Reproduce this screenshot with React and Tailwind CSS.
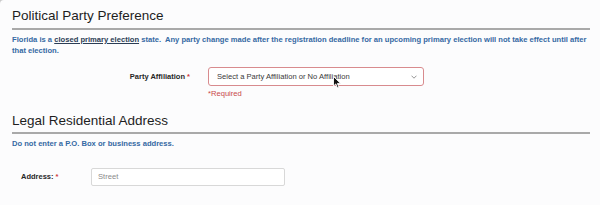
import React from "react";

const Cursor = () => (
  <svg
    className="absolute left-[124px] top-[8px]"
    width="9"
    height="13"
    viewBox="0 0 9 13"
  >
    <path
      d="M0.5 0.5 L0.5 10 L2.8 7.9 L4.4 11.8 L5.9 11.2 L4.4 7.4 L7.6 7.4 Z"
      fill="#111"
      stroke="#fff"
      strokeWidth="0.9"
      strokeLinejoin="round"
    />
  </svg>
);

const SectionTitle = ({ children, className = "" }) => (
  <h2
    className={`text-[13.5px] leading-[16px] text-[#1e1e1e] border-b-2 border-[#a9a9a9] ${className}`}
  >
    {children}
  </h2>
);

export default function App() {
  return (
    <div className="w-[600px] h-[205px] bg-[#c9c9c9] overflow-hidden">
      <div className="w-full h-full bg-[#fcfcfd] rounded-tl-[4px] pl-[12px] pr-[10px] font-['Liberation_Sans',Arial,sans-serif]">
        {/* Political party */}
        <SectionTitle className="pt-[7.5px] pb-[4.5px]">
          Political Party Preference
        </SectionTitle>
        <p className="mt-[5px] text-[7.6px] leading-[10.5px] font-bold text-[#3569a3] whitespace-nowrap">
          Florida is a{" "}
          <span className="underline text-[#2b3d55]">closed primary election</span>{" "}
          state.&nbsp; Any party change made after the registration deadline for
          an upcoming primary election will not take effect until after
          <br />
          that election.
        </p>

        <div className="mt-[11px] flex items-center">
          <label className="w-[178px] text-right text-[7.5px] font-bold text-[#262626]">
            Party Affiliation <span className="text-[#d03a3a]">*</span>
          </label>
          <div className="ml-[18px] relative w-[216px] h-[19px] border border-[#d88b8e] rounded-[3px] bg-white flex items-center pl-[8px] pr-[5px]">
            <span className="flex-1 text-[7.6px] text-[#3a3a3a]">
              Select a Party Affiliation or No Affiliation
            </span>
            <svg width="6" height="4" viewBox="0 0 6 4" className="mr-[1px]">
              <path
                d="M0.5 0.7 L3 3.2 L5.5 0.7"
                fill="none"
                stroke="#8a8a8a"
                strokeWidth="0.9"
              />
            </svg>
            <Cursor />
          </div>
        </div>
        <p className="mt-[3px] ml-[196px] text-[7.6px] leading-[10px] text-[#c8494b]">
          *Required
        </p>

        {/* Residential address */}
        <SectionTitle className="mt-[13.5px] pb-[3.5px]">
          Legal Residential Address
        </SectionTitle>
        <p className="mt-[4.75px] text-[7.6px] leading-[10.5px] font-bold text-[#3569a3]">
          Do not enter a P.O. Box or business address.
        </p>

        <div className="mt-[18.5px] flex items-center">
          <label className="ml-[9px] w-[70px] text-[7.5px] font-bold text-[#262626]">
            Address: <span className="text-[#d03a3a]">*</span>
          </label>
          <div className="w-[194px] h-[18px] border border-[#d8d8d8] rounded-[2px] bg-white flex items-center pl-[6px]">
            <span className="text-[7.6px] text-[#8a8a8a]">Street</span>
          </div>
        </div>
      </div>
    </div>
  );
}
